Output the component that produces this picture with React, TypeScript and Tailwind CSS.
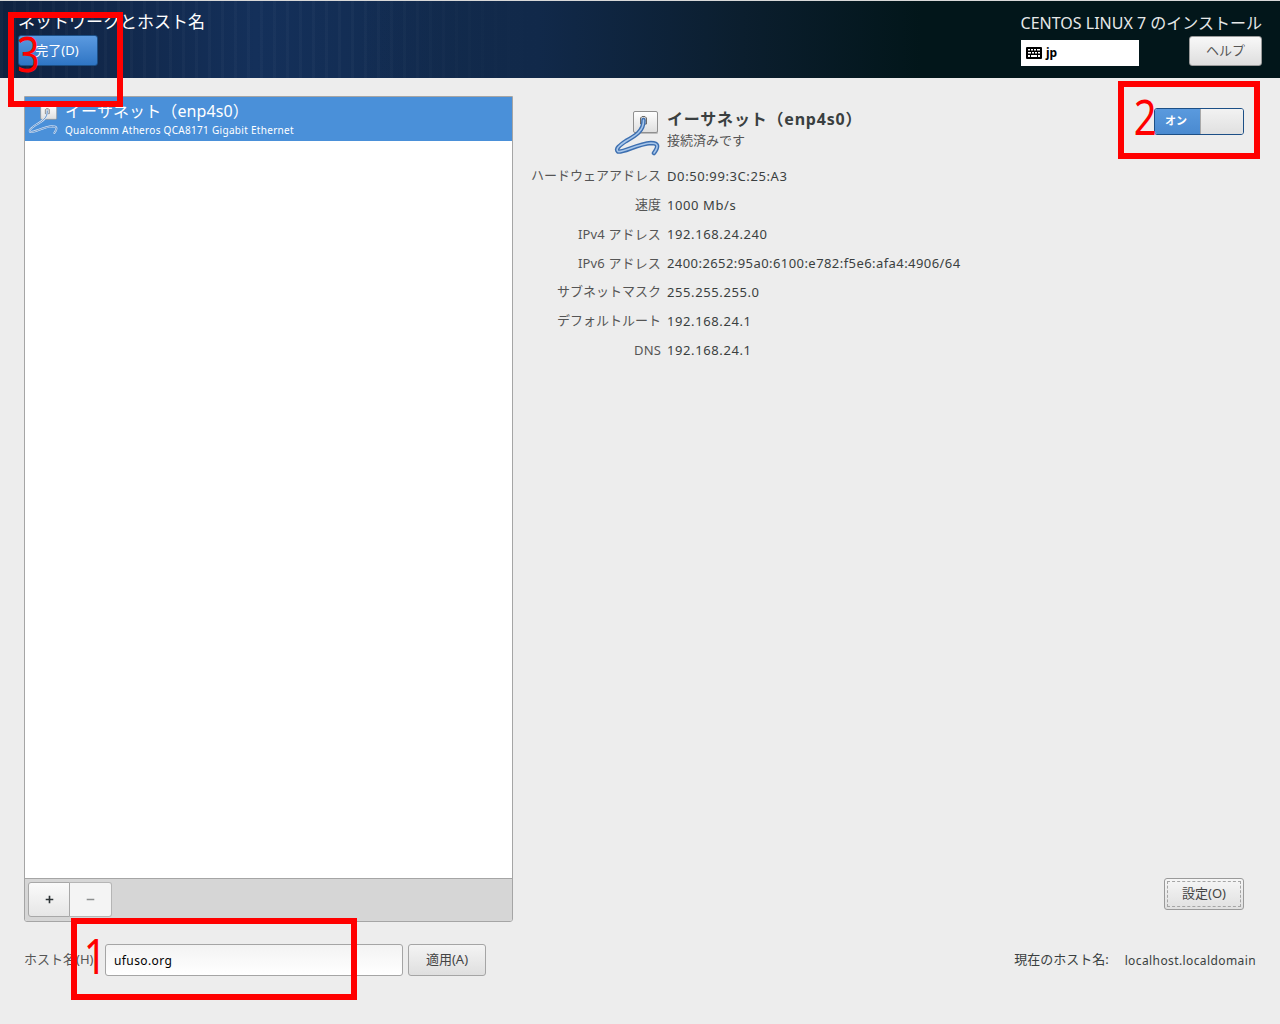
import { Minus, Plus } from "lucide-react";

const fontStack = { fontFamily: '"Noto Sans", "Noto Sans CJK JP", sans-serif' };

const cablePath = "M30.500 12C31 23 22 28 13 33C7 37 2 41 5 43.500C10 45 24 36 38 35C45 35 46 38 41 45";

function CableIcon({ className, small }: { className: string; small?: boolean }) {
  const gradientId = small ? "plugSmall" : "plugBig";
  return (
    <svg viewBox="0 0 48 48" className={className} fill="none">
      <defs>
        <linearGradient id={gradientId} x1="0" y1="0" x2="0" y2="1">
          <stop offset="0" stopColor="#ffffff" />
          <stop offset="1" stopColor="#dedede" />
        </linearGradient>
      </defs>
      {!small && <rect x="21" y="5" width="24" height="21" rx="1.5" fill="#bdbdbd" />}
      <rect x="20.500" y="3.500" width="24" height="21" rx="1.500" fill={`url(#${gradientId})`} stroke="#8f8f8f" />
      <path d="M27.500 16v-6l1.500-1.500h3l1.500 1.500v6z" fill="#d4d4d4" stroke="#6a6a6a" />
      <path d={cablePath} stroke={small ? "#dbe8f7" : "#3d6fb0"} strokeWidth={small ? 3 : 4.5} strokeLinecap="round" />
      <path d={cablePath} stroke={small ? "#4a7fbf" : "#a7c6ea"} strokeWidth={small ? 1.2 : 1.6} strokeLinecap="round" />
    </svg>
  );
}

function KeyboardIcon() {
  return (
    <svg viewBox="0 0 16 12" className="w-4 h-3 shrink-0">
      <rect width="16" height="12" rx="1" fill="#000" />
      <path
        d="M2 2h2v1.500H2zM5 2h2v1.500H5zM8 2h2v1.500H8zM11 2h3v1.500h-3zM2 5h3v1.500H2zM6 5h2v1.500H6zM9 5h2v1.500H9zM12 5h2v1.500h-2zM2 8h2v2H2zM5 8h6v2H5zM12 8h2v2h-2z"
        fill="#fff"
      />
    </svg>
  );
}

const details = [
  { label: "ハードウェアアドレス", value: "D0:50:99:3C:25:A3", latin: false },
  { label: "速度", value: "1000 Mb/s", latin: false },
  { label: "IPv4 アドレス", value: "192.168.24.240", latin: true },
  { label: "IPv6 アドレス", value: "2400:2652:95a0:6100:e782:f5e6:afa4:4906/64", latin: true },
  { label: "サブネットマスク", value: "255.255.255.0", latin: false },
  { label: "デフォルトルート", value: "192.168.24.1", latin: false },
  { label: "DNS", value: "192.168.24.1", latin: true },
];

export default function App() {
  return (
    <div
      style={fontStack}
      className="relative w-[1280px] h-[1024px] overflow-hidden bg-[#ededed] text-[#2e3436] text-[13px] flex flex-col"
    >
      {/* Header */}
      <header className="h-[78px] shrink-0 flex justify-between pl-[18px] pr-[18px] pt-[11px] border-t border-[#d8d8d8] bg-[linear-gradient(90deg,transparent_0%,transparent_28%,#11294a_42%,#0b1e2e_58%,#02161a_72%,#02161a_100%),repeating-linear-gradient(90deg,rgba(255,255,255,0.025)_0px,rgba(255,255,255,0.025)_3px,transparent_3px,transparent_13px),linear-gradient(90deg,#0f2240_0%,#14305a_20%,#11294a_42%)]">
        <div className="flex flex-col items-start">
          <h1 className="text-[17px] leading-[20px] text-white font-normal">ネットワークとホスト名</h1>
          <button className="mt-[3px] w-[80px] h-[31px] rounded-[3px] border border-[#1c4f86] bg-[linear-gradient(#5b9ae0,#2f75c4)] text-white text-[13px] pr-[2px]">
            完了(D)
          </button>
        </div>
        <div className="flex flex-col items-end">
          <div className="pt-[1px] text-[16px] leading-[20px] text-[#e6e8e8]">CENTOS LINUX 7 のインストール</div>
          <div className="mt-[3px] flex items-start">
            <div className="mt-[4px] w-[118px] h-[26px] bg-white flex items-center pl-[5px] gap-[4px] text-black text-[12px] font-bold">
              <KeyboardIcon />
              <span>jp</span>
            </div>
            <button className="ml-[50px] w-[73px] h-[30px] rounded-[3px] border border-[#9a9a9a] bg-[linear-gradient(#f8f8f8,#dedede)] text-[#555] text-[13px]">
              ヘルプ
            </button>
          </div>
        </div>
      </header>

      {/* Body */}
      <main className="flex-1 grid grid-cols-[489px_1fr] grid-rows-[826px_auto] pt-[18px] pl-[24px] pr-[24px]">
        <section className="flex flex-col border border-[#a5a5a5] rounded-b-[3px] overflow-hidden">
          <div className="h-[44px] shrink-0 bg-[#4a90d9] flex text-white">
            <CableIcon small className="w-[32px] h-[32px] ml-[2px] mt-[6px]" />
            <div className="ml-[6px] pt-[4px]">
              <div className="text-[16px] leading-[20px] tracking-[0.1px]">イーサネット（enp4s0）</div>
              <div className="text-[10px] leading-[14px] mt-[2px] tracking-[0.3px]">Qualcomm Atheros QCA8171 Gigabit Ethernet</div>
            </div>
          </div>
          <div className="flex-1 bg-white" />
          <div className="h-[43px] shrink-0 border-t border-[#a5a5a5] bg-[#d6d6d6] pl-[3px] pt-[3px] flex items-start">
            <button className="w-[42px] h-[35px] border border-[#a8a8a8] rounded-l-[3px] bg-[linear-gradient(#fafafa,#e6e6e6)] text-[#2e3436] flex items-center justify-center">
              <Plus size={13} strokeWidth={3} strokeLinecap="butt" />
            </button>
            <button className="w-[42px] h-[35px] border border-l-0 border-[#b5b5b5] rounded-r-[3px] bg-[#f4f4f4] text-[#8d8f8f] flex items-center justify-center">
              <Minus size={13} strokeWidth={2.5} strokeLinecap="butt" />
            </button>
          </div>
        </section>

        <section className="relative flex flex-col">
          <div className="flex justify-between items-start">
            <div>
              <div className="h-[66px] flex pl-[100px]">
                <CableIcon className="w-[48px] h-[48px] mt-[12px]" />
                <div className="ml-[6px] pt-[13px]">
                  <div className="text-[16px] leading-[20px] font-bold tracking-[0.8px] text-[#3a3f40]">イーサネット（enp4s0）</div>
                  <div className="text-[13px] leading-[18px] mt-[2px] text-[#555]">接続済みです</div>
                </div>
              </div>
              <div className="grid grid-cols-[148px_auto] gap-x-[6px] auto-rows-[29px] items-center">
                {details.map(({ label, value, latin }) => (
                  <div key={label} className="contents">
                    <div className={latin ? "text-right text-[13px] tracking-[0.15px] whitespace-nowrap text-[#555]" : "text-right text-[13px] pb-[1px] whitespace-nowrap text-[#555]"}>
                      {label}
                    </div>
                    <div className={value.length > 20 ? "text-[13px] tracking-[0.43px] whitespace-nowrap text-[#3a3f40]" : "text-[13px] tracking-[0.6px] whitespace-nowrap text-[#3a3f40]"}>
                      {value}
                    </div>
                  </div>
                ))}
              </div>
            </div>
            <div className="mt-[12px] mr-[12px] w-[90px] h-[27px] flex border border-[#1c4f86] rounded-[3px] overflow-hidden">
              <div className="w-[45px] pr-[3px] bg-[linear-gradient(#5a9ade,#4a8ad0)] text-white text-[11px] font-bold flex items-center justify-center">オン</div>
              <div className="flex-1 border-l border-[#a8a8a8] bg-[linear-gradient(#f2f2f2,#e0e0e0)]" />
            </div>
          </div>
          <button className="mt-auto mb-[12px] mr-[12px] self-end w-[80px] h-[32px] rounded-[3px] border border-[#9a9a9a] bg-[linear-gradient(#f6f6f6,#e0e0e0)] p-[2px] text-[13px] text-[#444]">
            <span className="flex h-full items-center justify-center border border-dashed border-[#a5a5a5]">設定(O)</span>
          </button>
        </section>

        <div className="flex items-center h-[32px] mt-[22px]">
          <span className="w-[81px] text-[13px] whitespace-nowrap text-[#555]">ホスト名(H)</span>
          <div className="w-[298px] h-[32px] rounded-[3px] border border-[#a5a5a5] bg-[linear-gradient(#f3f3f3,#ffffff)] flex items-center pl-[8px] pt-[1px] text-[12px] tracking-[0.4px] text-black">
            ufuso.org
          </div>
          <button className="ml-[5px] w-[78px] h-[32px] rounded-[3px] border border-[#a5a5a5] bg-[linear-gradient(#f4f4f4,#dfdfdf)] text-[13px] text-[#444]">
            適用(A)
          </button>
        </div>
        <div className="flex items-center justify-end h-[32px] mt-[22px] text-[#3a3f40]">
          <span className="text-[13px]">現在のホスト名:</span>
          <span className="ml-[16px] text-[12px] tracking-[0.4px] pt-[1px]">localhost.localdomain</span>
        </div>
      </main>

      {/* Red annotations drawn over the screenshot */}
      <div className="absolute left-[8px] top-[12px] w-[115px] h-[95px] border-[6px] border-[#ff0000]" />
      <div className="absolute left-[1118px] top-[81px] w-[142px] h-[78px] border-[6px] border-[#ff0000]" />
      <div className="absolute left-[71px] top-[918px] w-[286px] h-[82px] border-[6px] border-[#ff0000]" />
      <span className="absolute left-[14px] top-[19px] text-[#ff0000] text-[50px] leading-[68px] scale-x-[0.8]">3</span>
      <span className="absolute left-[1131px] top-[82px] text-[#ff0000] text-[50px] leading-[68px] scale-x-[0.8]">2</span>
      <span className="absolute left-[81px] top-[921px] text-[#ff0000] text-[50px] leading-[68px] scale-x-[0.8]">1</span>
    </div>
  );
}
